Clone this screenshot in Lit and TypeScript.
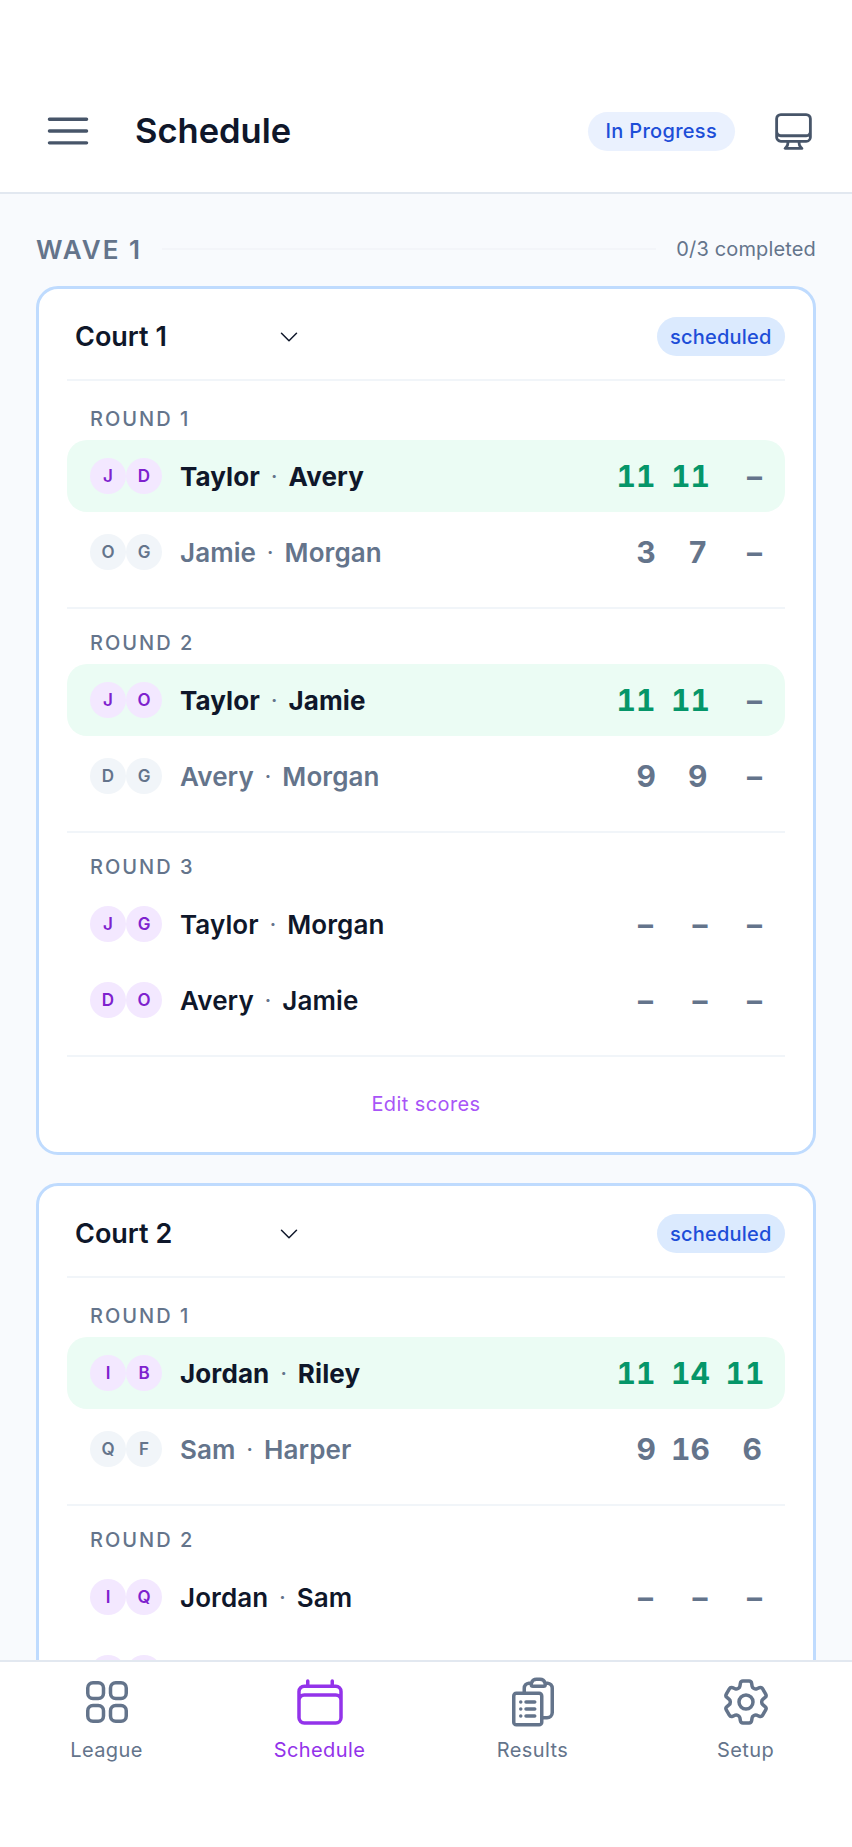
import { LitElement, css, html, svg } from "lit";
import { customElement } from "lit/decorators.js";

type Side = { initials: [string, string]; names: [string, string]; scores: string[]; won?: boolean; lost?: boolean };
type Round = { label: string; sides: [Side, Side] };
type Court = { name: string; rounds: Round[]; footer: boolean };

const dash = ["–", "–", "–"];

const courts: Court[] = [
	{
		name: "Court 1",
		footer: true,
		rounds: [
			{
				label: "ROUND 1",
				sides: [
					{ initials: ["J", "D"], names: ["Taylor", "Avery"], scores: ["11", "11", "–"], won: true },
					{ initials: ["O", "G"], names: ["Jamie", "Morgan"], scores: ["3", "7", "–"], lost: true },
				],
			},
			{
				label: "ROUND 2",
				sides: [
					{ initials: ["J", "O"], names: ["Taylor", "Jamie"], scores: ["11", "11", "–"], won: true },
					{ initials: ["D", "G"], names: ["Avery", "Morgan"], scores: ["9", "9", "–"], lost: true },
				],
			},
			{
				label: "ROUND 3",
				sides: [
					{ initials: ["J", "G"], names: ["Taylor", "Morgan"], scores: dash },
					{ initials: ["D", "O"], names: ["Avery", "Jamie"], scores: dash },
				],
			},
		],
	},
	{
		name: "Court 2",
		footer: false,
		rounds: [
			{
				label: "ROUND 1",
				sides: [
					{ initials: ["I", "B"], names: ["Jordan", "Riley"], scores: ["11", "14", "11"], won: true },
					{ initials: ["Q", "F"], names: ["Sam", "Harper"], scores: ["9", "16", "6"], lost: true },
				],
			},
			{
				label: "ROUND 2",
				sides: [
					{ initials: ["I", "Q"], names: ["Jordan", "Sam"], scores: dash },
					{ initials: ["B", "F"], names: ["Riley", "Harper"], scores: dash },
				],
			},
		],
	},
];

const icons = {
	menu: svg`<path d="M3.75 6.75h16.5M3.75 12h16.5m-16.5 5.25h16.5" />`,
	monitor: svg`<path d="M9 17.25v1.007a3 3 0 0 1-.879 2.122L7.5 21h9l-.621-.621A3 3 0 0 1 15 18.257V17.25m6-12V15a2.25 2.25 0 0 1-2.25 2.25H5.25A2.25 2.25 0 0 1 3 15V5.25m18 0A2.25 2.25 0 0 0 18.75 3H5.25A2.25 2.25 0 0 0 3 5.25m18 0V12a2.25 2.25 0 0 1-2.25 2.25H5.25A2.25 2.25 0 0 1 3 12V5.25" />`,
	chevron: svg`<path d="m19.5 8.25-7.5 7.5-7.5-7.5" />`,
	league: svg`<path d="M3.75 6A2.25 2.25 0 0 1 6 3.75h2.25A2.25 2.25 0 0 1 10.5 6v2.25a2.25 2.25 0 0 1-2.25 2.25H6a2.25 2.25 0 0 1-2.25-2.25V6ZM3.75 15.75A2.25 2.25 0 0 1 6 13.5h2.25a2.25 2.25 0 0 1 2.25 2.25V18a2.25 2.25 0 0 1-2.25 2.25H6A2.25 2.25 0 0 1 3.75 18v-2.25ZM13.5 6a2.25 2.25 0 0 1 2.25-2.25H18A2.25 2.25 0 0 1 20.25 6v2.25A2.25 2.25 0 0 1 18 10.5h-2.25a2.25 2.25 0 0 1-2.25-2.25V6ZM13.5 15.75a2.25 2.25 0 0 1 2.25-2.25H18a2.25 2.25 0 0 1 2.25 2.25V18A2.25 2.25 0 0 1 18 20.25h-2.25A2.25 2.25 0 0 1 13.5 18v-2.25Z" />`,
	schedule: svg`<path d="M6.75 3v2.25M17.25 3v2.25M3 18.75V7.5a2.25 2.25 0 0 1 2.25-2.25h13.5A2.25 2.25 0 0 1 21 7.5v11.25m-18 0A2.25 2.25 0 0 0 5.25 21h13.5A2.25 2.25 0 0 0 21 18.75m-18 0v-7.5A2.25 2.25 0 0 1 5.25 9h13.5A2.25 2.25 0 0 1 21 11.25v7.5" />`,
	results: svg`<path d="M9 12h3.75M9 15h3.75M9 18h3.75m3 .75H18a2.25 2.25 0 0 0 2.25-2.25V6.108c0-1.135-.845-2.098-1.976-2.192a48.424 48.424 0 0 0-1.123-.08m-5.801 0c-.065.21-.1.433-.1.664 0 .414.336.75.75.75h4.5a.75.75 0 0 0 .75-.75 2.25 2.25 0 0 0-.1-.664m-5.8 0A2.251 2.251 0 0 1 13.5 2.25H15c1.012 0 1.867.668 2.15 1.586m-5.8 0c-.376.023-.75.05-1.124.08C9.095 4.01 8.25 4.973 8.25 6.108V8.25m0 0H4.875c-.621 0-1.125.504-1.125 1.125v11.25c0 .621.504 1.125 1.125 1.125h9.75c.621 0 1.125-.504 1.125-1.125V9.375c0-.621-.504-1.125-1.125-1.125H8.25ZM6.75 12h.008v.008H6.75V12Zm0 3h.008v.008H6.75V15Zm0 3h.008v.008H6.75V18Z" />`,
	setup: svg`<path d="M9.594 3.94c.09-.542.56-.94 1.11-.94h2.593c.55 0 1.02.398 1.11.94l.213 1.281c.063.374.313.686.645.87.074.04.147.083.22.127.325.196.72.257 1.075.124l1.217-.456a1.125 1.125 0 0 1 1.37.49l1.296 2.247a1.125 1.125 0 0 1-.26 1.431l-1.003.827c-.293.241-.438.613-.43.992a7.723 7.723 0 0 1 0 .255c-.008.378.137.75.43.991l1.004.827c.424.35.534.955.26 1.43l-1.298 2.247a1.125 1.125 0 0 1-1.369.491l-1.217-.456c-.355-.133-.75-.072-1.076.124a6.47 6.47 0 0 1-.22.128c-.331.183-.581.495-.644.869l-.213 1.281c-.09.543-.56.94-1.11.94h-2.594c-.55 0-1.019-.398-1.11-.94l-.213-1.281c-.062-.374-.312-.686-.644-.87a6.52 6.52 0 0 1-.22-.127c-.325-.196-.72-.257-1.076-.124l-1.217.456a1.125 1.125 0 0 1-1.369-.49l-1.297-2.247a1.125 1.125 0 0 1 .26-1.431l1.004-.827c.292-.24.437-.613.43-.991a6.932 6.932 0 0 1 0-.255c.007-.38-.138-.751-.43-.992l-1.004-.827a1.125 1.125 0 0 1-.26-1.43l1.297-2.247a1.125 1.125 0 0 1 1.37-.491l1.216.456c.356.133.751.072 1.076-.124.072-.044.146-.086.22-.128.332-.183.582-.495.644-.869l.214-1.28Z" /><path d="M15 12a3 3 0 1 1-6 0 3 3 0 0 1 6 0Z" />`,
};

const tabs = [
	{ label: "League", icon: icons.league },
	{ label: "Schedule", icon: icons.schedule, active: true },
	{ label: "Results", icon: icons.results },
	{ label: "Setup", icon: icons.setup },
];

@customElement("app-root")
export class AppRoot extends LitElement {
	static styles = css`
		:host {
			display: block;
			font-family: Inter, "Liberation Sans", sans-serif;
			color: #0f172a;
		}

		svg {
			display: block;
			fill: none;
			stroke: currentColor;
			stroke-width: 1.5;
			stroke-linecap: round;
			stroke-linejoin: round;
			flex: none;
		}

		.app {
			height: 1847px;
			display: flex;
			flex-direction: column;
			background: #f8fafd;
		}

		.topbar {
			flex: none;
			display: flex;
			align-items: center;
			padding: 104px 36px 34px 41px;
			background: #fff;
			border-bottom: 2px solid #e2e8f0;
			color: #475569;
		}

		.menu {
			width: 54px;
			height: 54px;
		}

		.title {
			margin: 0 0 2px 40px;
			font-size: 34.5px;
			font-weight: 600;
			color: #0f172a;
			flex: 1;
		}

		.status {
			height: 39px;
			padding: 0 18px;
			display: flex;
			align-items: center;
			margin-right: 36px;
			border-radius: 20px;
			background: #eaf1fe;
			color: #1d4ed8;
			font-size: 20px;
			font-weight: 500;
			letter-spacing: 0.3px;
		}

		.monitor {
			width: 45px;
			height: 45px;
		}

		main {
			flex: 1;
			min-height: 0;
			overflow: hidden;
			padding: 39px 36px 0;
		}

		.wave-head {
			display: flex;
			align-items: center;
			gap: 20px;
			height: 32px;
			margin-bottom: 21px;
		}

		.wave {
			font-size: 26px;
			font-weight: 600;
			letter-spacing: 2px;
			color: #64748b;
		}

		.rule {
			flex: 1;
			height: 2px;
			background: #f3f5f9;
		}

		.done {
			font-size: 20px;
			letter-spacing: 0.15px;
			color: #64748b;
		}

		.card {
			background: #fff;
			border: 3px solid #bfdbfe;
			border-radius: 22px;
			padding: 0 28px;
			margin-bottom: 28px;
		}

		.card-head {
			display: flex;
			align-items: center;
			justify-content: space-between;
			padding: 28px 0 23px;
			margin-bottom: 4px;
			border-bottom: 2px solid #f1f5f9;
		}

		.court {
			width: 226px;
			padding-left: 8px;
			display: flex;
			align-items: center;
			justify-content: space-between;
			font-size: 27px;
			font-weight: 600;
		}

		.chevron {
			width: 24px;
			height: 24px;
		}

		.badge {
			height: 39px;
			padding: 0 13.5px;
			display: flex;
			align-items: center;
			border-radius: 20px;
			background: #dbeafe;
			color: #1d4ed8;
			font-size: 20px;
			font-weight: 500;
			letter-spacing: 0.2px;
		}

		.round {
			padding: 21px 0 19px;
			border-bottom: 2px solid #f1f5f9;
		}

		.round.last {
			border-bottom: none;
		}

		.round-label {
			height: 26px;
			line-height: 26px;
			margin: 0 0 8px 23px;
			font-size: 20px;
			font-weight: 500;
			letter-spacing: 2px;
			color: #64748b;
		}

		.rows {
			display: flex;
			flex-direction: column;
			gap: 4px;
		}

		.row {
			height: 72px;
			display: flex;
			align-items: center;
			padding: 0 23px;
			border-radius: 20px;
		}

		.row.won {
			background: #ebfcf4;
		}

		.avatars {
			display: flex;
			margin-right: 18px;
		}

		.avatar {
			width: 36px;
			height: 36px;
			border-radius: 50%;
			display: flex;
			align-items: center;
			justify-content: center;
			background: #f3e8ff;
			color: #7e22ce;
			font-size: 17px;
			font-weight: 600;
		}

		.lost .avatar {
			background: #f1f5f9;
			color: #64748b;
		}

		.names {
			flex: 1;
			display: flex;
			align-items: center;
			font-size: 26px;
			font-weight: 600;
			letter-spacing: 0.1px;
		}

		.won .names {
			font-weight: 700;
		}

		.lost .names {
			color: #64748b;
		}

		.sep {
			margin: 0 11px;
			font-size: 20px;
			font-weight: 600;
			color: #64748b;
		}

		.scores {
			display: flex;
			gap: 18px;
		}

		.score {
			width: 36.5px;
			text-align: right;
			font-size: 30px;
			font-weight: 700;
			font-variant-numeric: tabular-nums;
			color: #64748b;
		}

		.lost .score:first-child {
			margin: 0 -3px 0 3px;
		}

		.won .score {
			color: #059669;
		}

		.won .score.empty {
			color: #64748b;
		}

		.card-foot {
			padding: 34px 0 35px;
			border-top: 2px solid #f1f5f9;
			text-align: center;
			font-size: 20px;
			line-height: 26px;
			letter-spacing: 0.4px;
			color: #a855f7;
		}

		nav {
			flex: none;
			height: 187px;
			box-sizing: border-box;
			display: grid;
			grid-template-columns: repeat(4, 1fr);
			padding-top: 12px;
			background: #fff;
			border-top: 2px solid #e2e8f0;
		}

		.tab {
			display: flex;
			flex-direction: column;
			align-items: center;
			gap: 7px;
			color: #64748b;
			font-size: 20px;
			line-height: 26px;
			letter-spacing: 0.4px;
		}

		.tab.active {
			color: #9333ea;
		}

		.tab svg {
			width: 56px;
			height: 56px;
		}
	`;

	private icon(path: unknown, cls = "") {
		return html`<svg class=${cls} viewBox="0 0 24 24">${path}</svg>`;
	}

	private renderSide(side: Side) {
		const cls = side.won ? "row won" : side.lost ? "row lost" : "row";
		return html`
			<div class=${cls}>
				<div class="avatars">
					${side.initials.map((i) => html`<span class="avatar">${i}</span>`)}
				</div>
				<div class="names">
					<span>${side.names[0]}</span><span class="sep">·</span><span>${side.names[1]}</span>
				</div>
				<div class="scores">
					${side.scores.map((s) => html`<span class="score ${s === "–" ? "empty" : ""}">${s}</span>`)}
				</div>
			</div>
		`;
	}

	private renderCourt(court: Court) {
		return html`
			<section class="card">
				<div class="card-head">
					<div class="court">${court.name} ${this.icon(icons.chevron, "chevron")}</div>
					<span class="badge">scheduled</span>
				</div>
				${court.rounds.map(
					(round, i) => html`
						<div class="round ${court.footer && i === court.rounds.length - 1 ? "last" : ""}">
							<div class="round-label">${round.label}</div>
							<div class="rows">${round.sides.map((s) => this.renderSide(s))}</div>
						</div>
					`,
				)}
				${court.footer ? html`<div class="card-foot">Edit scores</div>` : ""}
			</section>
		`;
	}

	render() {
		return html`
			<div class="app">
				<header class="topbar">
					${this.icon(icons.menu, "menu")}
					<div class="title">Schedule</div>
					<span class="status">In Progress</span>
					${this.icon(icons.monitor, "monitor")}
				</header>
				<main>
					<div class="wave-head">
						<span class="wave">WAVE 1</span>
						<span class="rule"></span>
						<span class="done">0/3 completed</span>
					</div>
					${courts.map((c) => this.renderCourt(c))}
				</main>
				<nav>
					${tabs.map(
						(t) => html`
							<div class="tab ${t.active ? "active" : ""}">${this.icon(t.icon)}<span>${t.label}</span></div>
						`,
					)}
				</nav>
			</div>
		`;
	}
}
